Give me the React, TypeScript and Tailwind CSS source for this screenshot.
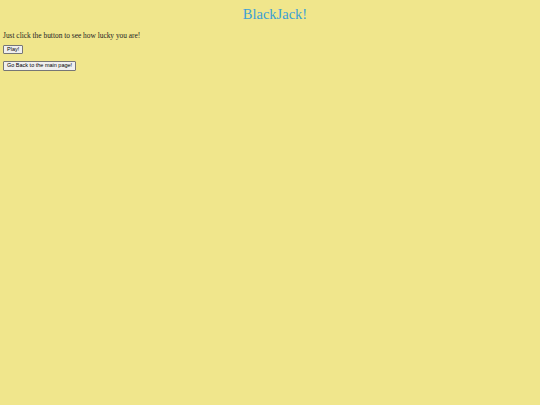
export default function App() {
  return (
    <div className="w-[540px] h-[405px] bg-[#f0e68c] overflow-hidden font-['Liberation_Serif',serif]">
      <h1 className="text-center text-[14.5px] leading-none text-[#3ba0d6] pt-[7px] pl-[10px] m-0">BlackJack!</h1>
      <p className="text-[7.4px] leading-none text-[#222] ml-[3px] mt-[10px]">Just click the button to see how lucky you are!</p>
      <div className="flex flex-col items-start gap-[7px] ml-[3px] mt-[6px] font-['Liberation_Sans',Arial,sans-serif]">
        <button className="px-[3px] h-[9.5px] text-[5.5px] leading-none bg-[#efefef] border border-[#767676] rounded-[1px] text-black">Play!</button>
        <button className="px-[3px] h-[9.5px] text-[5.5px] leading-none bg-[#efefef] border border-[#767676] rounded-[1px] text-black">Go Back to the main page!</button>
      </div>
    </div>
  );
}
